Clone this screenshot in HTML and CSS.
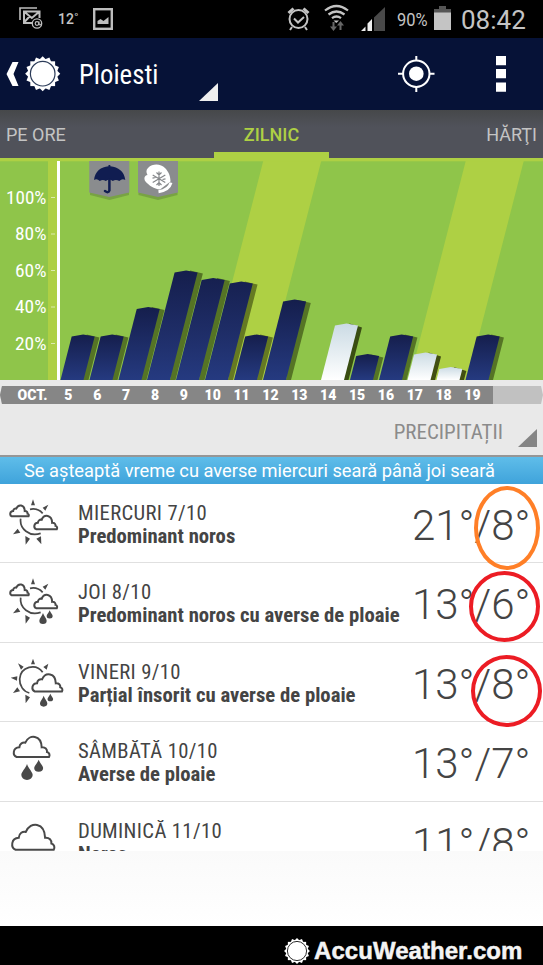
FILE: index.html
```html
<!DOCTYPE html>
<html lang="ro">
<head>
<meta charset="utf-8">
<title>Ploiesti</title>
<link rel="stylesheet" href="styles.css">
</head>
<body>
<svg class="defs" width="0" height="0">
  <defs>
    <g id="sun">
      <rect x="-12.4" y="-12.4" width="24.8" height="24.8"/>
      <rect x="-12.4" y="-12.4" width="24.8" height="24.8" transform="rotate(22.5)"/>
      <rect x="-12.4" y="-12.4" width="24.8" height="24.8" transform="rotate(45)"/>
      <rect x="-12.4" y="-12.4" width="24.8" height="24.8" transform="rotate(67.5)"/>
    </g>
    <path id="cloud" vector-effect="non-scaling-stroke" d="M10 63C-3 58 -2 35 18 34C19 23 28 18 36 20C48 -7 84 -3 85 34C96 33 102 40 101 48C109 50 110 58 107 63Z"/>
    <path id="drop" d="M0 0C3 10 11 16 11 23A11 10 0 0 1 -11 23C-11 16 -3 10 0 0Z"/>
    <linearGradient id="navy" gradientUnits="userSpaceOnUse" x1="0" y1="-110" x2="0" y2="0"><stop offset="0" stop-color="#151e4c"/><stop offset=".6" stop-color="#1f2e69"/><stop offset="1" stop-color="#253a80"/></linearGradient>
    <linearGradient id="navyShort" x1="0" y1="0" x2="0" y2="1"><stop offset="0" stop-color="#151e4c"/><stop offset="1" stop-color="#253a80"/></linearGradient>
    <linearGradient id="snow" x1="0" y1="0" x2="0" y2="1"><stop offset="0" stop-color="#cbdbe4"/><stop offset="1" stop-color="#fff"/></linearGradient>
  </defs>
</svg>

<header class="status">
  <svg class="mail" width="24" height="23" viewBox="0 0 24 23" fill="none" stroke="#bdbdbd"><path d="M1 13V1H18" stroke-width="1.6"/><path d="M14 16H5V4.500H20.500V11M5 4.500L12.800 11L20.500 4.500M5 15.500L10.500 9.500" stroke-width="2"/><circle cx="18" cy="16.500" r="4.700" stroke-width="1.300"/><circle cx="18" cy="16.500" r="1.800" stroke-width="1.200"/><path d="M20 14.500v3q2 1 2.500-1" stroke-width="1.100"/></svg>
  <span class="t-small">12˚</span>
  <svg class="pic" width="20" height="22" viewBox="0 0 20 22"><rect x="1.200" y="1.200" width="17.600" height="19.600" fill="none" stroke="#bdbdbd" stroke-width="2.400"/><path d="M4.500 16v-3l3-2 3 2 5-4v7z" fill="#bdbdbd"/></svg>
  <svg class="sysicons" width="110" height="30" viewBox="285 3 110 30" fill="none" stroke="#c4c4c4">
    <circle cx="298.500" cy="19" r="9" stroke-width="2"/><path d="M294 18.500l4 4 6-5.500M292 27l-2 3M305 27l2 3" stroke-width="2"/><path d="M288.500 13l5-4.500M303.500 8.500l5 4.500" stroke-width="3"/>
    <path d="M325 10.500q11.500-9 23 0M328.500 14.500q8-6 16 0M332 18.200q4.500-3.400 9 0" stroke-width="2.200"/><path d="M333.500 20.500h5.500l-2.750 2.500z" fill="#c4c4c4" stroke="none"/>
    <path d="M333.500 22v7M340.500 30v-7" stroke="#666" stroke-width="2"/><path d="M330 26.500h7l-3.500 4.500zM337 25.500h7l-3.500-4.500z" fill="#666" stroke="none"/>
    <path d="M361 31l4.500-4.500v4.500zM367.500 31v-7.500l4.500-4.500v12z" fill="#eee" stroke="none"/><path d="M374 31v-13.500l11-10.500v24z" fill="#494949" stroke="none"/>
  </svg>
  <span class="t-batt">90%</span>
  <svg class="batt" width="17" height="25" viewBox="0 0 17 25"><path d="M5 0h7v3h5v5H0V3h5z" fill="#555"/><path d="M0 6.500h17V24H0z" fill="#c4c4c4"/></svg>
  <span class="t-clock">08:42</span>
</header>

<nav class="appbar">
  <svg width="64" height="72" viewBox="0 38 64 72"><path d="M12.500 62h6L13.500 74l5 12h-6L6.500 74z" fill="#fff"/><g transform="translate(42.700 73.700)" fill="#fff"><use href="#sun"/><circle r="12.300" fill="#fff" stroke="#2b3b58" stroke-width="1.200"/></g></svg>
  <h1><span class="t-city">Ploiesti</span></h1>
  <i class="corner"></i>
  <svg class="actions" width="130" height="72" viewBox="390 38 130 72"><g fill="none" stroke="#fff" stroke-width="2"><circle cx="416.300" cy="73.700" r="13.200"/><path d="M416.300 56v5M416.300 87v5M398 73.700h5M430 73.700h4.500"/></g><circle cx="416.300" cy="73.700" r="7.300" fill="#fff"/><path d="M496 56h10v9.300h-10zM496 69h10v9.300h-10zM496 82.500h10v9.300h-10z" fill="#fff"/></svg>
</nav>

<nav class="tabs">
  <a>PE ORE</a>
  <a class="active">ZILNIC</a>
  <a class="right">HĂRŢI</a>
</nav>

<svg class="chart" width="543" height="222" viewBox="0 158 543 222">
  <rect y="158" width="543" height="222" fill="#8fc54a"/>
  <path d="M48 158h10v222H48zM264 158h58L265 380h-58zM466.500 158h58L467.500 380h-58z" fill="#aed044"/>
  <rect y="158" width="543" height="3.300" fill="#aed044"/>
  <path d="M51 197.500h4M51 234h4M51 270.500h4M51 307h4M51 343.500h4" stroke="#dcebad" stroke-width="1"/>
  <rect x="57" y="161" width="3" height="219" fill="#fff"/>
  <g transform="translate(0 380) skewX(-14.400)">
    <g fill="#1c2400" fill-opacity=".5">
      <path d="M75-45.500l13.500 3V0H83zM104-45.500l13.500 3V0H112zM133-73l13.500 3V0H141zM162-109.500l13.500 3V0H170zM191-102l13.500 3V0H199zM219.500-98.500l13.500 3V0H228zM248.500-45.500l13.500 3V0H257zM277.500-80l13.500 3V0H286zM393-45.500l13.500 3V0H401zM364-25.500l13.500 3V0H372zM479.500-45.500l13.500 3V0H488z"/>
      <path d="M335-56.500l13.500 4V0H343zM421.500-27.500l13.500 4V0H430zM450.500-13l13.500 4V0H459z" fill-opacity=".75"/>
    </g>
    <g fill="url(#navyShort)">
      <path d="M60.500 0v-43.500l11-2 12 2V0zM89.500 0v-43.500l11-2 12 2V0z"/>
      <path d="M118.500 0v-71l11-2 12 2V0z"/>
      <path fill="url(#navy)" d="M147 0v-107.500l11-2 12 2V0zM176 0v-100l11-2 12 2V0zM205 0v-96.500l11-2 12 2V0z"/>
      <path d="M234 0v-43.500l11-2 12 2V0z"/>
      <path d="M263 0v-78.500l11-2 12 2V0z"/>
      <path d="M350 0v-24l11-2 12 2V0z"/>
      <path d="M379 0v-43.500l11-2 12 2V0z"/>
      <path d="M465.500 0v-43.500l11-2 12 2V0z"/>
    </g>
    <path fill="url(#snow)" d="M321 0v-54.500l11-2 12 2V0z"/>
    <path fill="url(#snow)" d="M407.500 0v-25.500l11-2 12 2V0z"/>
    <path fill="url(#snow)" d="M436.500 0v-11l11-2 12 2V0z"/>
  </g>
  <g class="ylabels">
    <text x="6" y="204" textLength="40.500" lengthAdjust="spacingAndGlyphs">100%</text><text x="15" y="240.300" textLength="31.500" lengthAdjust="spacingAndGlyphs">80%</text><text x="15" y="276.800" textLength="31.500" lengthAdjust="spacingAndGlyphs">60%</text><text x="15" y="313.300" textLength="31.500" lengthAdjust="spacingAndGlyphs">40%</text><text x="15" y="349.800" textLength="31.500" lengthAdjust="spacingAndGlyphs">20%</text>
  </g>
  <path d="M90 163h39v32l-19.500 5-19.500-5zM138.500 163h39v32l-19.500 5-19.500-5z" fill="#6d9440" opacity=".7"/>
  <path d="M89.300 161h40v31.500l-20 4.500-20-4.500zM138 161h40v31.500l-20 4.500-20-4.500z" fill="#8a8c8e"/>
  <path d="M94 180c1-9 7-13 14.500-13.800v-1.200h1.800v1.200c8 .8 14 5 15 13.800q-3-2-6 1-3.500-2-6.500 0-3.500-2.500-7 0-3-2-6 0-3-3-5.800-1z" fill="#101d51"/><path d="M109.400 180v10.500q-.8 3-4.400.5" stroke="#101d51" stroke-width="2.500" fill="none" stroke-linecap="round"/>
  <path d="M148 168c5-5 13-4 17 0 4 4 5.500 9 5.500 13.500l-10.500 8c-6-.5-11-4-14.500-8-2-3-1-6 2-6.500-1.500-3-1.500-5 .5-7z" fill="#fff"/><path d="M158.500 191.700q10.500-1.500 12.500-9" stroke="#fff" stroke-width="3" fill="none"/><path d="M159 171.500v14.500M152.700 175l12.600 7.500M152.700 182.500l12.600-7.500M156.500 172.500l2.500 2.500 2.500-2.500M156.500 185l2.500-2.500 2.500 2.500M152.500 178.200l3-.7M162.500 179.500l3-.7" stroke="#85878a" stroke-width="1.200" fill="none"/>
</svg>

<section class="timeline">
  <div class="dates">
    <b class="month">OCT.</b><b>5</b><b>6</b><b>7</b><b>8</b><b>9</b><b>10</b><b>11</b><b>12</b><b>13</b><b>14</b><b>15</b><b>16</b><b>17</b><b>18</b><b>19</b>
  </div>
  <div class="picker"><span>PRECIPITAȚII</span><i class="corner gray"></i></div>
</section>
<p class="banner">Se așteaptă vreme cu averse miercuri seară până joi seară</p>

<main class="list">
  <article>
    <svg class="wx" viewBox="0 0 234 238"><g class="ln"><path d="M90 76Q112 71 128 88M62 104C58 134 88 160 122 148"/><use href="#cloud" transform="translate(30 63) scale(.520 .540)"/><use href="#cloud" transform="translate(102 94) scale(.640 .660)"/></g><path class="fl" d="M99 46l6 18H93zM145 62l-9 18-8-9zM39 151l14-17 8 12zM77 182l-1-26 14 8zM124 181l-15-17 14-7z"/></svg>
    <div class="txt"><h2>MIERCURI 7/10</h2><p>Predominant noros</p></div>
    <div class="temp">21°/8°</div>
    <i class="ring orange"></i>
  </article>
  <article>
    <svg class="wx" viewBox="0 0 234 238"><g class="ln"><path d="M90 76Q112 71 128 88M62 104C58 134 88 160 122 148"/><use href="#cloud" transform="translate(30 63) scale(.520 .540)"/><use href="#cloud" transform="translate(102 94) scale(.640 .660)"/></g><path class="fl" d="M99 46l6 18H93zM145 62l-9 18-8-9zM39 151l14-17 8 12zM77 182l-1-26 14 8z"/><use class="fl" href="#drop" transform="translate(129 150)"/><use class="fl" href="#drop" transform="translate(149 142) scale(.820 .750)"/></svg>
    <div class="txt"><h2>JOI 8/10</h2><p>Predominant noros cu averse de ploaie</p></div>
    <div class="temp">13°/6°</div>
    <i class="ring red1"></i>
  </article>
  <article>
    <svg class="wx" viewBox="0 0 234 238"><g class="ln"><path d="M128 88C108 60 62 70 59 108C58 128 70 145 88 150"/><use href="#cloud" transform="translate(96 92) scale(.840 .850)"/></g><path class="fl" d="M99 47l6 17H93zM54 61l17 10-8 9zM145 62l-5 18-10-8zM32 104l20-4-1 13zM39 150l13-17 8 12zM77 181l-1-26 14 8z"/><use class="fl" href="#drop" transform="translate(131 158)"/><use class="fl" href="#drop" transform="translate(151 152) scale(.770 .700)"/></svg>
    <div class="txt"><h2>VINERI 9/10</h2><p>Parțial însorit cu averse de ploaie</p></div>
    <div class="temp">13°/8°</div>
    <i class="ring red2"></i>
  </article>
  <article>
    <svg class="wx" viewBox="0 0 234 238"><g class="ln"><use href="#cloud" transform="translate(40 42)"/></g><use class="fl" href="#drop" transform="translate(81 126) scale(1.550 1.450)"/><use class="fl" href="#drop" transform="translate(116 113) scale(1.220 1.100)"/></svg>
    <div class="txt"><h2>SÂMBĂTĂ 10/10</h2><p>Averse de ploaie</p></div>
    <div class="temp">13°/7°</div>
  </article>
  <article>
    <svg class="wx" viewBox="0 0 234 238"><g class="ln"><use href="#cloud" transform="translate(35 65) scale(1.180 1.240)"/></g></svg>
    <div class="txt"><h2>DUMINICĂ 11/10</h2><p>Noros</p></div>
    <div class="temp">11°/8°</div>
  </article>
</main>
<div class="blank"></div>
<footer><svg width="28" height="28" viewBox="-19 -19 38 38" fill="#fff"><use href="#sun"/><circle r="13" stroke="#222" stroke-width="1.300"/></svg><span class="t-brand">AccuWeather.com</span></footer>
</body>
</html>
```
FILE: styles.css
```css
* { box-sizing: border-box; margin: 0; padding: 0; }
body { width: 543px; height: 965px; overflow: hidden; background: #fff; font-family: Roboto, "Liberation Sans", sans-serif; }
svg { display: block; flex: none; }
.defs { position: absolute; }
span { white-space: nowrap; transform-origin: 0 50%; display: inline-block; }
.status { height: 38px; background: #000; color: #c4c4c4; display: flex; align-items: flex-start; }
.mail { margin: 7px 0 0 19px; }
.t-small { font: 500 14px/20px Roboto; width: 20px; margin: 9px 0 0 15px; }
.pic { margin: 8px 0 0 15px; }
.sysicons { margin: 3px 0 0 172px; }
.t-batt { font: 400 17.500px/20px Roboto; width: 34px; margin: 10px 0 0 2px; transform: scaleX(.94); }
.batt { margin: 6px 0 0 3px; }
.t-clock { font: 400 26px/30px Roboto; margin: 5px 0 0 10px; }
.appbar { height: 72px; background: #061237; color: #fff; display: flex; }
.appbar h1 { font-weight: 400; font-size: 26.800px; line-height: 72px; margin: 1px 0 0 15px; width: 120px; }
.t-city { font-stretch: 75%; }
.corner { width: 19px; height: 18px; margin-top: 45px; background: #efefef; clip-path: polygon(100% 0, 100% 100%, 0 100%); }
.actions { margin-left: 172px; }
.tabs { height: 48px; background: linear-gradient(#46484a, #50525a 35%, #50525a); color: #c4c4c4; display: grid; grid-template-columns: 214px 115px 214px; font-size: 18px; line-height: 50px; }
.tabs a { height: 48px; padding-left: 6px; }
.tabs .active { color: #aed044; font-weight: 500; border-bottom: 6px solid #aed044; padding: 0; text-align: center; }
.tabs .right { text-align: right; padding-right: 6px; }
.ylabels text { font-size: 18px; fill: #fff; font-stretch: 75%; }
.timeline { height: 77px; background: #e9e9e9; padding-top: 6px; border-bottom: 2px solid #969696; }
.dates { height: 18px; display: grid; grid-template-columns: 51px repeat(15, 28.87px); padding-left: 3px; color: #fff; font: 700 14px/18px Roboto; font-stretch: 90%; text-align: center; background: linear-gradient(#868686, #868686) 0 0/493px 100% no-repeat, #c1c1c1; clip-path: polygon(2px 0, 541px 0, 543px 50%, 541px 100%, 2px 100%, 0 50%); }
.dates .month { padding-left: 8px; }
.picker { height: 51px; display: flex; justify-content: flex-end; color: #8b8b8b; font-size: 21px; line-height: 56px; font-stretch: 75%; }
.picker .corner { margin: 25px 6px 0 15px; }
.gray { background: #858585; }
.banner { height: 27px; background: linear-gradient(#5fbde9, #3fa3db); color: #fff; font-size: 18.250px; line-height: 27px; padding-left: 24px; white-space: nowrap; }
.list { height: 367px; overflow: hidden; color: #444; }
article { height: 79.400px; border-bottom: 1px solid #e0e0e0; display: flex; position: relative; }
.wx { width: 78px; height: 79.330px; }
.ln { fill: none; stroke: #494949; stroke-width: 5.200; }
.ln use { stroke-width: 2px; fill: #fff; }
.fl { fill: #494949; }
.txt { padding-top: 17px; width: 334px; white-space: nowrap; font-stretch: 75%; }
.txt h2 { font-weight: 400; font-size: 20.700px; line-height: 24px; letter-spacing: .35px; }
.txt p { font-weight: 700; font-size: 20.700px; line-height: 23px; }
.temp { font-weight: 300; font-size: 42px; line-height: 84px; white-space: nowrap; }
.ring { position: absolute; border: 4px solid #ec1c24; border-radius: 50%; }
.orange { border-color: #ff7f27; left: 474px; top: 1.500px; width: 66px; height: 84.500px; z-index: 1; }
.red1 { left: 468.700px; top: 8px; width: 71px; height: 71px; }
.red2 { left: 470.700px; top: 12px; width: 71px; height: 72px; z-index: 1; }
.blank { height: 75px; background: linear-gradient(#fafafa, #fff); }
footer { height: 39px; background: #000; color: #f4f4f4; display: flex; padding: 11px 0 0 283px; }
.t-brand { font: 700 24px/28px "Liberation Sans", sans-serif; margin-left: 3px; letter-spacing: .05px; -webkit-text-stroke: .5px #f4f4f4; }
```
